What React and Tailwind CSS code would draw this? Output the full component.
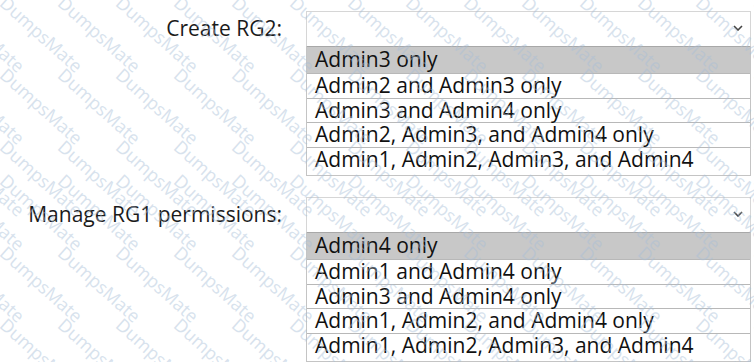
import React from 'react'

const questions = [
  {
    label: 'Create RG2:',
    options: [
      'Admin3 only',
      'Admin2 and Admin3 only',
      'Admin3 and Admin4 only',
      'Admin2, Admin3, and Admin4 only',
      'Admin1, Admin2, Admin3, and Admin4',
    ],
  },
  {
    label: 'Manage RG1 permissions:',
    options: [
      'Admin4 only',
      'Admin1 and Admin4 only',
      'Admin3 and Admin4 only',
      'Admin1, Admin2, and Admin4 only',
      'Admin1, Admin2, Admin3, and Admin4',
    ],
  },
]

const Chevron = () => (
  <svg width="10" height="6" viewBox="0 0 10 6" fill="none" className="mr-[7px] mb-[15px]">
    <path d="M1 1l4 4 4-4" stroke="#444" strokeWidth="1.6" />
  </svg>
)

const AnswerBox = ({ label, options }) => (
  <div className="flex">
    <div className="w-[282px] h-[35px] flex items-center justify-end text-[21px] text-[#1a1a1a]">
      {label}
    </div>
    <div className="ml-[24px] w-[445px]">
      <div className="h-[35px] border border-b-0 border-[#d6d6d6] flex items-end justify-end">
        <Chevron />
      </div>
      <div className="border border-t-0 border-[#c4c4c4] pb-[4px]">
        {options.map((opt, i) => (
          <div
            key={opt}
            className={
              i === 0
                ? 'h-[27px] bg-[#c8c8c8] border-t border-[#a8a8a8] pl-[8px] leading-[25px] text-[21px] text-[#111]'
                : 'h-[24.5px] border-t border-[#b8b8b8] pl-[8px] leading-[23px] text-[21px] text-[#111]'
            }
          >
            {opt}
          </div>
        ))}
      </div>
    </div>
  </div>
)

const rows = [-10, 62, 134, 168, 240, 312]
const cols = [-58, 0, 58, 116, 174, 232, 290, 348, 406, 464, 522, 580, 638, 696, 754]

export default function App() {
  return (
    <div className="relative w-[754px] h-[362px] overflow-hidden bg-white font-['Open_Sans','Noto_Sans',sans-serif]">
      <div className="pt-[11px] flex flex-col gap-[21px]">
        {questions.map(q => (
          <AnswerBox key={q.label} {...q} />
        ))}
      </div>

      {/* watermark */}
      <div className="absolute inset-0 pointer-events-none">
        {rows.map(y =>
          cols.map(x => (
            <span
              key={`${x}-${y}`}
              className="absolute origin-top-left rotate-[42deg] text-[18px] text-[#a9bfd8] opacity-45 whitespace-nowrap"
              style={{ left: x + 12, top: y }}
            >
              DumpsMate
            </span>
          ))
        )}
      </div>
    </div>
  )
}
